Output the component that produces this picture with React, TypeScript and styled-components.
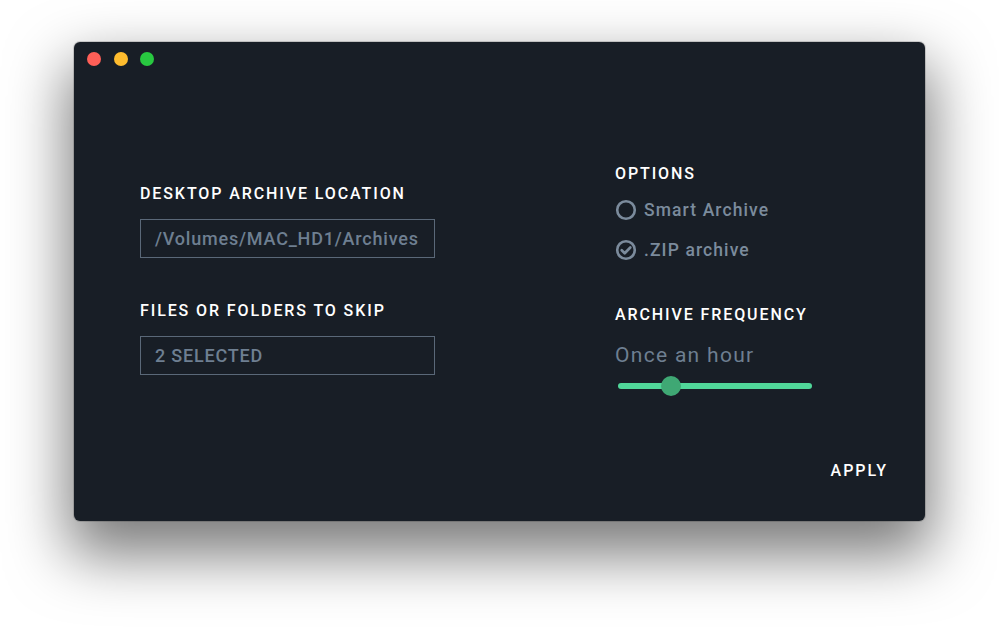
import React from "react";
import styled, { createGlobalStyle } from "styled-components";

const Global = createGlobalStyle`
  html, body { margin: 0; padding: 0; background: #ffffff; }
  body { font-family: Roboto, "Noto Sans", "Liberation Sans", sans-serif; }
  * { box-sizing: border-box; }
`;

const Page = styled.div`
  width: 999px;
  height: 627px;
  padding: 42px 0 0 74px;
  overflow: hidden;
`;

const Window = styled.div`
  width: 851px;
  height: 479px;
  background: #181e26;
  border-radius: 6px;
  box-shadow: 0 28px 60px 6px rgba(0, 0, 0, 0.52), 0 0 0 1px rgba(0, 0, 0, 0.15);
  display: flex;
  flex-direction: column;
`;

const TitleBar = styled.div`
  height: 33px;
  flex: none;
  display: flex;
  align-items: center;
  gap: 12.5px;
  padding: 0 0 0 13px;
`;

const Light = styled.span<{ $color: string }>`
  width: 14px;
  height: 14px;
  border-radius: 50%;
  background: ${(p) => p.$color};
`;

const Body = styled.div`
  flex: 1;
  display: grid;
  grid-template-columns: 475px 1fr;
  padding: 0 37px 0 66px;
  position: relative;
`;

const Column = styled.div<{ $top: number }>`
  display: flex;
  flex-direction: column;
  padding-top: ${(p) => p.$top}px;
`;

const Label = styled.div<{ $gap?: number }>`
  color: #ffffff;
  font-size: 16px;
  line-height: 20px;
  font-weight: 500;
  letter-spacing: 1.9px;
  white-space: nowrap;
  margin-top: ${(p) => p.$gap ?? 0}px;
`;

const Field = styled.div`
  width: 295px;
  height: 39px;
  margin-top: 15px;
  border: 1.5px solid #5a6878;
  display: flex;
  align-items: center;
  padding-left: 14px;
  color: #6e7f91;
  font-size: 18px;
  font-weight: 500;
  letter-spacing: 0.8px;
  white-space: nowrap;
`;

const Option = styled.div<{ $gap: number }>`
  display: flex;
  align-items: center;
  gap: 7px;
  margin-top: ${(p) => p.$gap}px;
  color: #7b8b9c;
  font-size: 17.5px;
  font-weight: 500;
  letter-spacing: 1.1px;
  height: 22px;
  white-space: nowrap;
`;

const Frequency = styled.div`
  color: #6e7f91;
  font-size: 21px;
  letter-spacing: 1.3px;
  line-height: 24px;
  margin-top: 18px;
  white-space: nowrap;
`;

const Slider = styled.div`
  position: relative;
  width: 194px;
  height: 20px;
  margin: 9px 0 0 3px;
  display: flex;
  align-items: center;
`;

const Track = styled.div`
  width: 100%;
  height: 5.5px;
  border-radius: 3px;
  background: #50d799;
`;

const Thumb = styled.div`
  position: absolute;
  top: 0;
  width: 20px;
  height: 20px;
  border-radius: 50%;
  background: #3fa874;
`;

const Apply = styled.button`
  position: absolute;
  right: 37px;
  bottom: 40px;
  background: none;
  border: none;
  padding: 0;
  color: #ffffff;
  font-family: inherit;
  font-size: 16px;
  font-weight: 500;
  letter-spacing: 2px;
  line-height: 20px;
  cursor: pointer;
`;

const RadioIcon = ({ checked }: { checked?: boolean }) => (
  <svg width="22" height="22" viewBox="0 0 22 22">
    <circle cx="11" cy="11" r="8.8" fill="none" stroke="#7b8b9c" strokeWidth="2.6" />
    {checked && (
      <path
        d="M6.7 11.3 L9.7 14.2 L15.3 8.5"
        fill="none"
        stroke="#7b8b9c"
        strokeWidth="2.7"
        strokeLinecap="round"
        strokeLinejoin="round"
      />
    )}
  </svg>
);

export default function App() {
  const value = 0.275;
  return (
    <>
      <Global />
      <Page>
        <Window>
          <TitleBar>
            <Light $color="#ff5f57" />
            <Light $color="#febc2e" />
            <Light $color="#28c840" />
          </TitleBar>
          <Body>
            <Column $top={109}>
              <Label>DESKTOP ARCHIVE LOCATION</Label>
              <Field>/Volumes/MAC_HD1/Archives</Field>
              <Label $gap={43}>FILES OR FOLDERS TO SKIP</Label>
              <Field>2 SELECTED</Field>
            </Column>
            <Column $top={89}>
              <Label>OPTIONS</Label>
              <Option $gap={15}>
                <RadioIcon />
                Smart Archive
              </Option>
              <Option $gap={18}>
                <RadioIcon checked />
                .ZIP archive
              </Option>
              <Label $gap={44}>ARCHIVE FREQUENCY</Label>
              <Frequency>Once an hour</Frequency>
              <Slider>
                <Track />
                <Thumb style={{ left: `${value * 194 - 10}px` }} />
              </Slider>
            </Column>
            <Apply>APPLY</Apply>
          </Body>
        </Window>
      </Page>
    </>
  );
}
